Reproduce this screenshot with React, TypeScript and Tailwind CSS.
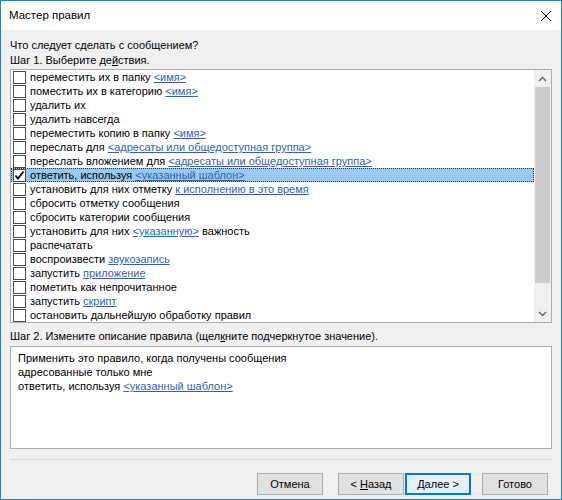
import React from 'react';

type Part = { t: string; link?: boolean };

const actions: Part[][] = [
    [{ t: 'переместить их в папку ' }, { t: '<имя>', link: true }],
    [{ t: 'поместить их в категорию ' }, { t: '<имя>', link: true }],
    [{ t: 'удалить их' }],
    [{ t: 'удалить навсегда' }],
    [{ t: 'переместить копию в папку ' }, { t: '<имя>', link: true }],
    [{ t: 'переслать для ' }, { t: '<адресаты или общедоступная группа>', link: true }],
    [{ t: 'переслать вложением для ' }, { t: '<адресаты или общедоступная группа>', link: true }],
    [{ t: 'ответить, используя ' }, { t: '<указанный шаблон>', link: true }],
    [{ t: 'установить для них отметку ' }, { t: 'к исполнению в это время', link: true }],
    [{ t: 'сбросить отметку сообщения' }],
    [{ t: 'сбросить категории сообщения' }],
    [{ t: 'установить для них ' }, { t: '<указанную>', link: true }, { t: ' важность' }],
    [{ t: 'распечатать' }],
    [{ t: 'воспроизвести ' }, { t: 'звукозапись', link: true }],
    [{ t: 'запустить ' }, { t: 'приложение', link: true }],
    [{ t: 'пометить как непрочитанное' }],
    [{ t: 'запустить ' }, { t: 'скрипт', link: true }],
    [{ t: 'остановить дальнейшую обработку правил' }],
];

const SELECTED = 7;

function Checkbox({ checked }: { checked?: boolean }) {
    return (
        <div className="w-[13px] h-[13px] border border-[#4d4d4d] bg-white flex items-center justify-center shrink-0">
            {checked && (
                <svg width="11" height="11" viewBox="0 0 11 11">
                    <path d="M1.5 5.5 L4 8.5 L9.5 1.5" fill="none" stroke="#000" strokeWidth="1.8" />
                </svg>
            )}
        </div>
    );
}

function Btn({ children, focused }: { children: React.ReactNode; focused?: boolean }) {
    return (
        <button
            className={
                focused
                    ? 'w-[66px] h-[22px] shrink-0 bg-[#e5f1fb] border-2 border-[#0078d7] text-[11px] leading-none text-black flex items-center justify-center'
                    : 'w-[66px] h-[22px] shrink-0 bg-[#e1e1e1] border border-[#adadad] text-[11px] leading-none text-black flex items-center justify-center'
            }
        >
            {children}
        </button>
    );
}

export default function App() {
    return (
        <div
            className="w-[562px] h-[500px] border border-[#1883d7] bg-[#f0f0f0] flex flex-col text-black overflow-hidden"
            style={{ fontFamily: '"Liberation Sans", Arial, sans-serif' }}
        >
            {/* Title bar */}
            <div className="h-[29px] bg-white flex items-center justify-between pl-[8px] pr-[8px] shrink-0">
                <span className="text-[11.5px]">Мастер правил</span>
                <svg width="12" height="12" viewBox="0 0 12 12" className="mr-[1px]">
                    <path d="M1 1 L11 11 M11 1 L1 11" stroke="#000" strokeWidth="1" />
                </svg>
            </div>

            <div className="flex flex-col px-[9px] pt-[8px] text-[11px]">
                <div className="leading-[15px]">Что следует сделать с сообщением?</div>
                <div className="leading-[15px]">
                    Шаг 1. Выберите де<span className="underline">й</span>ствия.
                </div>

                {/* Actions list */}
                <div className="mt-[1px] h-[254px] border border-[#abadb3] bg-white flex">
                    <div className="flex-1 flex flex-col">
                        {actions.map((parts, i) => (
                            <div
                                key={i}
                                className={
                                    i === SELECTED
                                        ? 'h-[14px] flex items-center gap-[4px] pl-[2px] bg-[#99c9ef] outline-1 outline-dotted outline-[#333] -outline-offset-1'
                                        : 'h-[14px] flex items-center gap-[4px] pl-[2px]'
                                }
                            >
                                <Checkbox checked={i === SELECTED} />
                                <span className="leading-[14px] whitespace-nowrap">
                                    {parts.map((p, j) =>
                                        p.link ? (
                                            <span key={j} className="text-[#2f64b0] underline">
                                                {p.t}
                                            </span>
                                        ) : (
                                            <span key={j}>{p.t}</span>
                                        )
                                    )}
                                </span>
                            </div>
                        ))}
                    </div>
                    {/* Scrollbar */}
                    <div className="w-[17px] bg-[#f0f0f0] flex flex-col">
                        <div className="h-[17px] flex items-center justify-center">
                            <svg width="9" height="6" viewBox="0 0 9 6">
                                <path d="M1 5 L4.5 1.5 L8 5" fill="none" stroke="#606060" strokeWidth="1.3" />
                            </svg>
                        </div>
                        <div className="mx-[1px] h-[196px] bg-[#cdcdcd]" />
                        <div className="flex-1" />
                        <div className="h-[17px] flex items-center justify-center">
                            <svg width="9" height="6" viewBox="0 0 9 6">
                                <path d="M1 1 L4.5 4.5 L8 1" fill="none" stroke="#606060" strokeWidth="1.3" />
                            </svg>
                        </div>
                    </div>
                </div>

                <div className="mt-[6px] leading-[15px]">
                    Шаг 2. Измените описание правила (щел<span className="underline">к</span>ните подчеркнутое значение).
                </div>

                {/* Description */}
                <div className="mt-[2px] h-[103px] border border-[#abadb3] bg-white pl-[7px] pt-[4px] leading-[14px]">
                    <div>Применить это правило, когда получены сообщения</div>
                    <div>адресованные только мне</div>
                    <div>
                        ответить, используя <span className="text-[#2f64b0] underline">&lt;указанный шаблон&gt;</span>
                    </div>
                </div>

                <div className="mt-[10px] h-px bg-[#d8d8d8]" />

                <div className="mt-[13px] flex items-center justify-end pr-[4px]">
                    <Btn>Отмена</Btn>
                    <div className="w-[15px] shrink-0" />
                    <Btn>
                        &lt;&nbsp;<span className="underline">Н</span>азад
                    </Btn>
                    <div className="w-[1px] shrink-0" />
                    <Btn focused>
                        <span className="underline">Д</span>алее&nbsp;&gt;
                    </Btn>
                    <div className="w-[11px] shrink-0" />
                    <Btn>Готово</Btn>
                </div>
            </div>
        </div>
    );
}
